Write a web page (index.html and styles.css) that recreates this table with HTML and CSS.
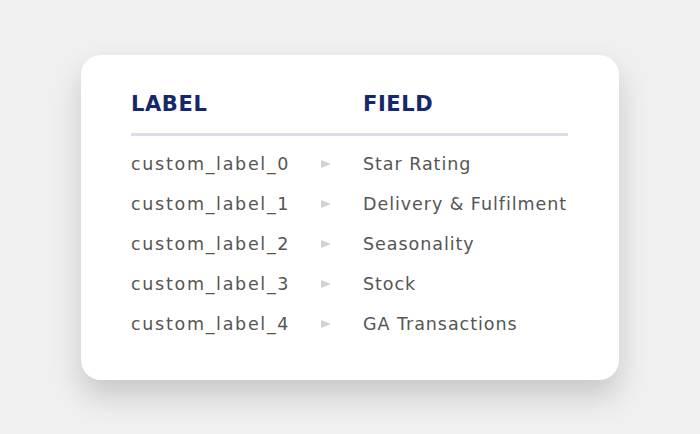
FILE: index.html
```html
<!DOCTYPE html>
<html>
<head>
<meta charset="utf-8">
<link rel="stylesheet" href="styles.css">
</head>
<body>
<div class="card">
  <div class="head">
    <div class="h-label">LABEL</div>
    <div></div>
    <div class="h-field">FIELD</div>
  </div>
  <div class="rows">
    <div class="row"><span class="lbl">custom_label_0</span><span class="arrow"></span><span class="fld">Star Rating</span></div>
    <div class="row"><span class="lbl">custom_label_1</span><span class="arrow"></span><span class="fld">Delivery &amp; Fulfilment</span></div>
    <div class="row"><span class="lbl">custom_label_2</span><span class="arrow"></span><span class="fld">Seasonality</span></div>
    <div class="row"><span class="lbl">custom_label_3</span><span class="arrow"></span><span class="fld">Stock</span></div>
    <div class="row"><span class="lbl">custom_label_4</span><span class="arrow"></span><span class="fld">GA Transactions</span></div>
  </div>
</div>
</body>
</html>
```

FILE: styles.css
```css
html, body { margin: 0; padding: 0; }
body {
  width: 700px;
  height: 434px;
  background: #f0f0f0;
  font-family: "DejaVu Sans", "Open Sans", sans-serif;
  padding: 55px 0 0 81px;
  box-sizing: border-box;
}
.card {
  width: 538px;
  height: 325px;
  box-sizing: border-box;
  background: #fff;
  border-radius: 20px;
  box-shadow: 0 16px 30px rgba(0,0,0,0.17);
  padding: 36px 51px 0 50px;
}
.head, .row {
  display: grid;
  grid-template-columns: 190px 42px 1fr;
  align-items: center;
  white-space: nowrap;
}
.head {
  font-size: 21px;
  line-height: 26px;
  font-weight: 700;
  letter-spacing: 0.6px;
  color: #15286b;
  padding-bottom: 16px;
  border-bottom: 3px solid #dcdde8;
}
.rows { padding-top: 8px; }
.row {
  height: 40px;
  font-size: 17.5px;
  letter-spacing: 0.95px;
  color: #555;
}
.lbl { letter-spacing: 1.7px; }
.arrow {
  width: 0; height: 0;
  border-top: 4.5px solid transparent;
  border-bottom: 4.5px solid transparent;
  border-left: 10px solid #d2d2d2;
}
```
